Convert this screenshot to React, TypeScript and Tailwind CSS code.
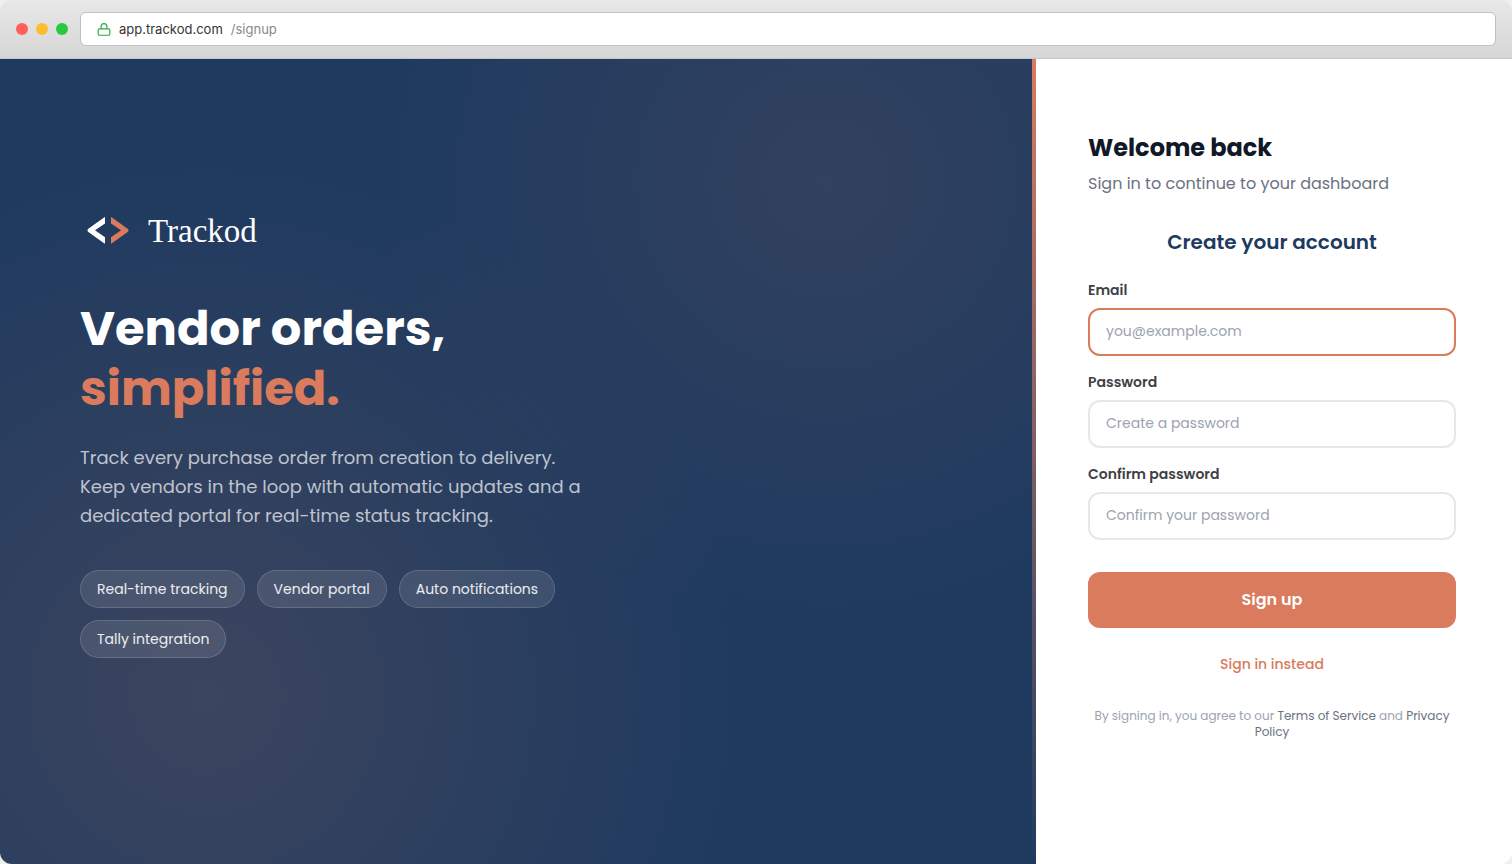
import React from 'react';

interface FieldProps {
  id: string;
  label: string;
  type: string;
  placeholder: string;
  active?: boolean;
}

const features = ['Real-time tracking', 'Vendor portal', 'Auto notifications', 'Tally integration'];

const fields: FieldProps[] = [
  { id: 'email', label: 'Email', type: 'email', placeholder: 'you@example.com', active: true },
  { id: 'password', label: 'Password', type: 'password', placeholder: 'Create a password' },
  { id: 'confirm', label: 'Confirm password', type: 'password', placeholder: 'Confirm your password' },
];

const BrowserBar: React.FC = () => (
  <header className="flex h-[59px] shrink-0 items-center gap-3 border-b border-[#c6c6c6] bg-linear-to-b from-[#e8e8e8] to-[#d6d6d6] px-4">
    <div className="flex gap-2">
      <span className="size-3 rounded-full bg-[#ff5f57]" />
      <span className="size-3 rounded-full bg-[#febc2e]" />
      <span className="size-3 rounded-full bg-[#28c840]" />
    </div>
    <div className="flex h-[34px] flex-1 items-center rounded-md border border-[#c0c0c0] bg-white px-4 pt-0.5 font-['Inter',sans-serif] text-[13px] text-[#333333]">
      <svg className="mr-2 size-[14px]" viewBox="0 0 24 24" fill="none" stroke="#28a745" strokeWidth="2">
        <rect x="2" y="10" width="20" height="11" rx="2" />
        <path d="M7 10V6a5 5 0 0 1 10 0v4" />
      </svg>
      <span>app.trackod.com</span>
      <span className="ml-2 text-[#888888]">/signup</span>
    </div>
  </header>
);

const Logo: React.FC = () => (
  <div className="flex items-center gap-3">
    <svg className="size-14" viewBox="0 0 56 56" aria-hidden="true">
      <path d="M25 14.500V20.600L15 27.200L25 34.200V40Q25 40.700 24.400 40.400L8 28.800Q6.800 27.400 8 26L24.400 14.200Q25 13.900 25 14.500Z" fill="#ffffff" />
      <path d="M31 14.500V20.600L41 27.200L31 34.200V40Q31 40.700 31.600 40.400L48 28.800Q49.200 27.400 48 26L31.600 14.200Q31 13.900 31 14.500Z" fill="#d97b5c" />
    </svg>
    <span className="font-['Georgia','Liberation_Serif',serif] text-[33px] leading-10 text-white">Trackod</span>
  </div>
);

const Hero: React.FC = () => (
  <section className="flex flex-1 flex-col justify-center bg-[#1e3a5f] bg-[radial-gradient(circle_at_20%_79%,rgba(217,123,92,0.16)_0%,transparent_52%),radial-gradient(circle_at_80%_15%,rgba(217,123,92,0.11)_0%,transparent_42%)] px-20 pb-[62px]">
    <Logo />
    <h1 className="mt-10 text-[48px] leading-[60px] font-bold text-white">
      Vendor orders,
      <br />
      <span className="text-[#d97b5c]">simplified.</span>
    </h1>
    <p className="mt-6 max-w-[520px] text-[18px] leading-[29px] text-white/70">
      Track every purchase order from creation to delivery. Keep vendors in the loop with automatic updates and a
      dedicated portal for real-time status tracking.
    </p>
    <ul className="mt-10 flex max-w-[520px] flex-wrap gap-3">
      {features.map((feature) => (
        <li key={feature} className="rounded-full border border-white/15 bg-white/10 px-4 py-2 text-[14px] leading-5 text-white/90">
          {feature}
        </li>
      ))}
    </ul>
  </section>
);

const Field: React.FC<FieldProps> = ({ id, label, type, placeholder, active }) => (
  <div className="flex flex-col gap-2">
    <label htmlFor={id} className="text-[14px] leading-5 font-semibold text-[#3f3f46]">
      {label}
    </label>
    <input
      id={id}
      type={type}
      placeholder={placeholder}
      className={`h-12 w-full rounded-xl border-2 bg-white px-4 text-[14px] text-[#111827] outline-none placeholder:text-[#9ca3af] ${
        active ? 'border-[#d97b5c]' : 'border-[#e5e7eb]'
      }`}
    />
  </div>
);

const SignupPanel: React.FC = () => (
  <main className="flex w-[480px] shrink-0 bg-white">
    <div className="w-1 shrink-0 bg-linear-to-b from-[#d97b5c] to-[#1e3a5f]" />
    <div className="flex flex-1 flex-col justify-center pr-14 pb-[52px] pl-[52px]">
      <h2 className="text-[24px] leading-8 font-bold text-[#111827]">Welcome back</h2>
      <p className="mt-2 text-[16px] leading-6 text-[#6b7280]">Sign in to continue to your dashboard</p>
      <form className="mt-8 flex flex-col" onSubmit={(e) => e.preventDefault()}>
        <h3 className="mb-6 text-center text-[20px] leading-7 font-semibold text-[#1e3a5f]">Create your account</h3>
        <div className="flex flex-col gap-4">
          {fields.map((field) => (
            <Field key={field.id} {...field} />
          ))}
        </div>
        <button type="submit" className="mt-8 h-14 rounded-xl bg-[#d97b5c] text-[16px] font-semibold text-white">
          Sign up
        </button>
        <button type="button" className="mt-6 self-center text-[14px] leading-6 font-medium text-[#d97b5c]">
          Sign in instead
        </button>
      </form>
      <p className="mt-8 text-center text-[12px] leading-4 text-[#9ca3af]">
        By signing in, you agree to our <a href="#terms" className="text-[#6b7280]">Terms of Service</a> and{' '}
        <a href="#privacy" className="text-[#6b7280]">Privacy Policy</a>
      </p>
    </div>
  </main>
);

export default function App() {
  return (
    <div className="min-h-screen bg-[#efefef] font-['Poppins','Inter',sans-serif]">
      <div className="flex min-h-screen flex-col overflow-hidden rounded-xl">
        <BrowserBar />
        <div className="flex flex-1">
          <Hero />
          <SignupPanel />
        </div>
      </div>
    </div>
  );
}
